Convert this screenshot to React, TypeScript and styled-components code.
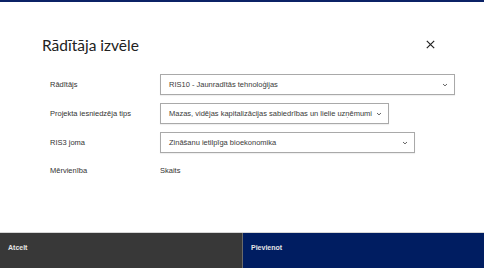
import React from 'react';
import styled, { createGlobalStyle } from 'styled-components';

const GlobalStyle = createGlobalStyle`
  html, body {
    margin: 0;
    padding: 0;
    background: #ffffff;
  }
  #root {
    height: 100vh;
  }
`;

const fields = [
  { label: 'Rādītājs', value: 'RIS10 - Jaunradītās tehnoloģijas', width: 295 },
  {
    label: 'Projekta iesniedzēja tips',
    value: 'Mazas, vidējas kapitalizācijas sabiedrības un lielie uzņēmumi',
    width: 229,
  },
  { label: 'RIS3 joma', value: 'Zināšanu ietilpīga bioekonomika', width: 255 },
];

const Chevron = () => (
  <svg width="6" height="4" viewBox="0 0 6 4">
    <path d="M1 1 L3 2.9 L5 1" fill="none" stroke="#666" strokeWidth="1" />
  </svg>
);

const CloseIcon = () => (
  <svg width="9" height="9" viewBox="0 0 9 9">
    <path d="M0.8 0.8 L8.2 8.2 M8.2 0.8 L0.8 8.2" stroke="#222" strokeWidth="1.2" />
  </svg>
);

const App = () => {
  return (
    <Page>
      <GlobalStyle />
      <TopBar />
      <Body>
        <Header>
          <Title>Rādītāja izvēle</Title>
          <CloseButton aria-label="Aizvērt">
            <CloseIcon />
          </CloseButton>
        </Header>
        <Form>
          {fields.map((f) => (
            <Row key={f.label}>
              <Label>{f.label}</Label>
              <SelectBox $width={f.width}>
                <SelectText>{f.value}</SelectText>
                <Chevron />
              </SelectBox>
            </Row>
          ))}
          <TextRow>
            <Label>Mērvienība</Label>
            <Value>Skaits</Value>
          </TextRow>
        </Form>
      </Body>
      <Footer>
        <FooterButton $primary={false}>Atcelt</FooterButton>
        <FooterButton $primary>Pievienot</FooterButton>
      </Footer>
    </Page>
  );
};

const Page = styled.div`
  display: flex;
  flex-direction: column;
  height: 100%;
  font-family: 'Liberation Sans', Arial, sans-serif;
  color: #333;
`;

const TopBar = styled.div`
  height: 2px;
  background: #0b2266;
`;

const Body = styled.div`
  flex: 1;
  padding: 31px 29px 0 42px;
`;

const Header = styled.div`
  display: flex;
  justify-content: space-between;
  align-items: center;
  height: 24px;
`;

const Title = styled.h1`
  margin: 0;
  font-family: Lato, 'Open Sans', sans-serif;
  font-size: 15.5px;
  font-weight: 400;
  line-height: 24px;
  color: #222;
`;

const CloseButton = styled.button`
  display: flex;
  align-items: center;
  justify-content: center;
  width: 16px;
  height: 16px;
  padding: 0;
  margin-right: 17px;
  margin-top: -2px;
  border: none;
  background: transparent;
`;

const Form = styled.div`
  display: flex;
  flex-direction: column;
  gap: 8px;
  margin-top: 17px;
  margin-left: 8px;
`;

const Row = styled.div`
  display: grid;
  grid-template-columns: 110px auto;
  align-items: center;
  height: 21px;
`;

const TextRow = styled(Row)`
  height: 18px;
`;

const Label = styled.span`
  font-size: 7.5px;
  color: #333;
`;

const Value = styled.span`
  font-size: 7.5px;
  color: #333;
`;

const SelectBox = styled.div<{ $width: number }>`
  box-sizing: border-box;
  display: flex;
  align-items: center;
  justify-content: space-between;
  width: ${(p) => p.$width}px;
  height: 21px;
  padding: 0 6px 0 8px;
  border: 1px solid #a9a9a9;
  box-shadow: 0 1px 1px rgba(0, 0, 0, 0.06);
  background: #fff;
`;

const SelectText = styled.span`
  font-size: 7.5px;
  color: #3a3a3a;
  white-space: nowrap;
`;

const Footer = styled.div`
  display: grid;
  grid-template-columns: 1fr 1fr;
  height: 35px;
  border-top: 1px solid #d6d6d6;
`;

const FooterButton = styled.div<{ $primary: boolean }>`
  display: flex;
  align-items: flex-start;
  padding: 11px 8px 0;
  font-size: 7px;
  font-weight: 700;
  color: #e6e6e6;
  background: ${(p) => (p.$primary ? '#001d61' : '#383838')};
  border-left: ${(p) => (p.$primary ? '1px solid #6a6a6a' : 'none')};
`;

export default App;
